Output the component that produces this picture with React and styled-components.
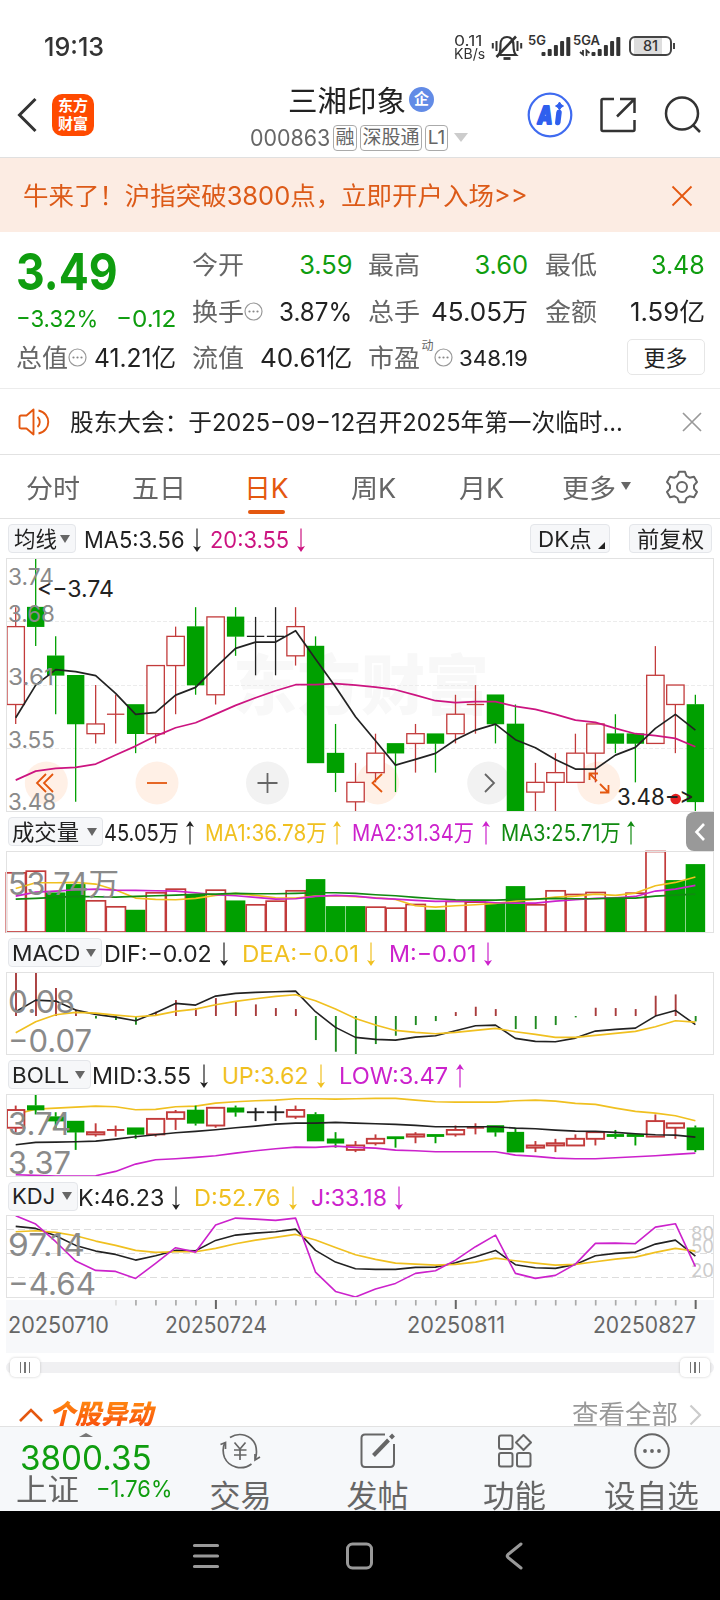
import React, { useLayoutEffect, useRef, useState } from "react";
import styled, { createGlobalStyle } from "styled-components";

const GREEN = "#00a000";
const TEXT_GREEN = "#0f9d0f";
const RED = "#c23b3b";
const ORANGE = "#e4570f";
const INK = "#222";
const YELLOW = "#f0c020";
const PURPLE = "#cc22cc";
const PINK = "#cc1480";

// kind, body top, body bottom, high, low
const candles = [
  ["r", 3.67, 3.59, 3.69, 3.57],
  ["g", 3.69, 3.67, 3.74, 3.65],
  ["g", 3.64, 3.62, 3.66, 3.58],
  ["g", 3.62, 3.57, 3.62, 3.49],
  ["r", 3.57, 3.56, 3.61, 3.55],
  ["r", 3.58, 3.58, 3.6, 3.55],
  ["g", 3.59, 3.56, 3.59, 3.54],
  ["r", 3.63, 3.56, 3.63, 3.55],
  ["r", 3.66, 3.63, 3.67, 3.58],
  ["g", 3.67, 3.61, 3.69, 3.6],
  ["r", 3.68, 3.6, 3.68, 3.59],
  ["g", 3.68, 3.66, 3.69, 3.64],
  ["k", 3.66, 3.66, 3.68, 3.62],
  ["k", 3.66, 3.66, 3.69, 3.62],
  ["r", 3.67, 3.64, 3.69, 3.63],
  ["g", 3.65, 3.53, 3.66, 3.53],
  ["g", 3.54, 3.52, 3.57, 3.5],
  ["r", 3.51, 3.49, 3.53, 3.48],
  ["r", 3.54, 3.52, 3.56, 3.51],
  ["g", 3.55, 3.54, 3.55, 3.5],
  ["r", 3.56, 3.55, 3.57, 3.52],
  ["g", 3.56, 3.55, 3.56, 3.52],
  ["r", 3.58, 3.56, 3.6, 3.55],
  ["r", 3.59, 3.59, 3.61, 3.56],
  ["g", 3.6, 3.57, 3.6, 3.55],
  ["g", 3.57, 3.48, 3.59, 3.48],
  ["r", 3.51, 3.5, 3.53, 3.48],
  ["r", 3.52, 3.51, 3.54, 3.48],
  ["r", 3.54, 3.51, 3.56, 3.51],
  ["r", 3.57, 3.54, 3.57, 3.51],
  ["g", 3.56, 3.55, 3.58, 3.54],
  ["g", 3.56, 3.55, 3.56, 3.51],
  ["r", 3.62, 3.55, 3.65, 3.55],
  ["r", 3.61, 3.59, 3.61, 3.54],
  ["g", 3.59, 3.49, 3.6, 3.48],
];

// every series below is stored in thirds of a pixel
const ma5 = [608, 510, 464, 470, 482, 535, 598, 592, 540, 517, 457, 400, 381, 381, 347, 432, 515, 605, 677, 750, 733, 715, 674, 645, 627, 674, 698, 733, 762, 762, 720, 697, 640, 598, 645];
const ma20 = [795, 768, 760, 757, 747, 720, 693, 663, 638, 623, 597, 571, 548, 527, 509, 509, 506, 510, 516, 524, 540, 557, 563, 560, 560, 574, 583, 598, 615, 622, 640, 656, 662, 670, 695];

const volume = "r188 r183 g248 g223 r272 r290 g300 r248 r237 g255 r240 g272 r284 r273 r242 g208 g289 g289 r291 r294 r283 g300 r274 r276 g277 g229 r284 r242 r253 r247 g263 r249 r124 g211 g163"
  .split(" ")
  .map((v) => [v[0], Number(v.slice(1))]);
const vol1 = [235, 218, 218, 217, 222, 240, 264, 268, 269, 265, 256, 250, 256, 263, 264, 258, 257, 260, 263, 268, 287, 291, 287, 284, 280, 273, 268, 261, 258, 252, 256, 249, 227, 217, 201];
const vol2 = [258, 246, 243, 239, 237, 240, 241, 242, 243, 248, 254, 257, 262, 267, 266, 259, 256, 258, 264, 267, 271, 274, 273, 273, 278, 279, 279, 273, 269, 265, 263, 259, 243, 237, 226];
const vol3 = [267, 265, 262, 259, 260, 261, 259, 257, 255, 253, 252, 250, 251, 251, 250, 248, 248, 250, 254, 257, 262, 266, 269, 270, 270, 268, 267, 265, 266, 266, 264, 264, 258, 255, 252];

const macdBars = [487, 487, 534, 598, 625, 630, 644, 605, 570, 594, 564, 574, 583, 594, 597, 690, 725, 733, 702, 677, 645, 633, 606, 590, 597, 657, 657, 645, 622, 593, 594, 597, 557, 553, 634];
const dif = [605, 570, 573, 600, 613, 621, 632, 608, 580, 585, 558, 550, 547, 545, 543, 605, 652, 682, 688, 690, 681, 677, 662, 647, 645, 685, 694, 695, 684, 663, 658, 654, 618, 601, 644];
const dea = [668, 635, 614, 607, 609, 615, 620, 616, 604, 597, 584, 574, 566, 559, 554, 572, 597, 625, 645, 661, 667, 671, 667, 661, 655, 665, 673, 682, 682, 676, 670, 664, 650, 632, 636];

const bollUp = [160, 145, 142, 139, 136, 138, 147, 146, 138, 136, 127, 123, 120, 118, 114, 114, 115, 114, 113, 113, 118, 123, 124, 124, 124, 120, 118, 121, 128, 131, 142, 152, 157, 165, 180];
const bollMid = [252, 245, 244, 243, 241, 235, 228, 222, 216, 212, 207, 201, 196, 190, 187, 187, 185, 187, 189, 191, 194, 198, 198, 198, 198, 202, 204, 208, 211, 212, 215, 219, 222, 223, 229];
const bollLow = [342, 344, 346, 346, 345, 332, 310, 297, 294, 290, 285, 277, 270, 264, 259, 260, 256, 260, 262, 268, 270, 273, 273, 273, 273, 283, 287, 292, 294, 294, 291, 288, 285, 281, 277];

const kLine = [499, 505, 527, 556, 573, 583, 600, 587, 571, 572, 541, 525, 519, 515, 507, 571, 606, 626, 628, 628, 622, 621, 608, 590, 571, 614, 623, 625, 613, 587, 580, 576, 552, 540, 588];
const dLine = [515, 512, 517, 527, 543, 556, 571, 577, 575, 575, 565, 551, 540, 532, 523, 540, 562, 584, 598, 609, 612, 615, 613, 606, 594, 602, 609, 615, 613, 605, 597, 591, 577, 565, 573];
const jLine = [467, 492, 545, 603, 631, 634, 655, 610, 563, 576, 495, 474, 477, 481, 474, 636, 694, 711, 687, 670, 640, 632, 600, 560, 525, 640, 655, 646, 612, 550, 549, 551, 501, 491, 620];

const xAt = (i) => 15.7 + i * 19.99;

const Line = ({ data, base, color, width = 1.6 }) => (
  <polyline
    fill='none'
    stroke={color}
    strokeWidth={width}
    strokeLinejoin='round'
    points={data.map((v, i) => `${xAt(i).toFixed(1)},${((v - base) / 3 + 0.4).toFixed(1)}`).join(" ")}
  />
);

const Candles = ({ top, perUnit, stroke }) => {
  const y = (p) => 0.5 + (top - p) * perUnit;
  return candles.map(([kind, a, b, high, low], i) => {
    const x = xAt(i);
    const color = kind === "g" ? GREEN : kind === "r" ? RED : "#222";
    const h = y(b) - y(a);
    return (
      <g key={i} stroke={color} strokeWidth={stroke}>
        <line x1={x} x2={x} y1={y(high)} y2={y(a)} />
        <line x1={x} x2={x} y1={y(b)} y2={y(low)} />
        {h < 0.1 && <line x1={x - 8.7} x2={x + 8.7} y1={y(a)} y2={y(a)} />}
        {h >= 0.1 && kind === "g" && (
          <rect x={x - 8.7} y={y(a) - 0.3} width='17.4' height={h + 0.6} fill={GREEN} stroke='none' />
        )}
        {h >= 0.1 && kind === "r" && (
          <rect x={x - 8.7} y={y(a)} width='17.4' height={h} fill='#fff' />
        )}
      </g>
    );
  });
};

const Label = ({ x, y, w, size = 31, color = "#8a8a8a", children }) => (
  <text x={x} y={y} fontSize={size} fill={color} textLength={w} lengthAdjust='spacingAndGlyphs'>
    {children}
  </text>
);

// squeezes or widens one line of text to the given width
const Fit = ({ w, children, ...rest }) => {
  const ref = useRef(null);
  const [scale, setScale] = useState(1);
  useLayoutEffect(() => {
    setScale(w / ref.current.offsetWidth);
  }, [w, children]);
  return (
    <FitBox $w={w} {...rest}>
      <span ref={ref} style={{ transform: `scaleX(${scale})` }}>
        {children}
      </span>
    </FitBox>
  );
};

const Arrow = ({ up }) => (
  <svg width='10' height='26' viewBox='0 0 10 26' fill='none' stroke='currentColor' strokeWidth='1.2'>
    {up ? <path d='M5 24.5V3' /> : <path d='M5 1.5V23' />}
    {up ? (
      <path d='M5 1L9 7L5 5.5L1 7Z' fill='currentColor' stroke='none' />
    ) : (
      <path d='M5 25L9 19L5 20.5L1 19Z' fill='currentColor' stroke='none' />
    )}
  </svg>
);

const Readings = ({ items }) =>
  items.map(([text, color, lead, w, gap, up]) => (
    <Reading key={text} $color={color} $lead={lead} $gap={gap}>
      <Fit w={w}>{text}</Fit>
      <Arrow up={up} />
    </Reading>
  ));

const Picker = ({ width, w, pad, children }) => (
  <Pill $w={width} $pad={pad}>
    <Fit w={w}>{children}</Fit>
    <Caret />
  </Pill>
);

const Info = () => (
  <svg width='19' height='19' viewBox='0 0 19 19' fill='none' stroke='#999' strokeWidth='1.2'>
    <circle cx='9.5' cy='9.5' r='8.5' />
    <g fill='#888' stroke='none'>
      <circle cx='5.5' cy='9.5' r='1.1' />
      <circle cx='9.5' cy='9.5' r='1.1' />
      <circle cx='13.5' cy='9.5' r='1.1' />
    </g>
  </svg>
);

const Signal = ({ label, w, data }) => (
  <SignalBox $w={w}>
    <b>{label}</b>
    <svg width='44' height='21' viewBox='0 0 44 21' fill='#333'>
      <rect x='13.5' y='16' width='4' height='4' rx='1' />
      <rect x='19.7' y='13' width='4' height='7' rx='1' />
      <rect x='25.9' y='9' width='4' height='11' rx='1' />
      <rect x='32.1' y='5' width='4' height='15' rx='1' />
      <rect x='38.3' y='1' width='4' height='19' rx='1' />
      {data && <path d='M5 14V18.5L2 16M8.5 20V14.5L11.5 17' stroke='#333' strokeWidth='1.8' fill='none' />}
    </svg>
  </SignalBox>
);

const StatusBar = () => (
  <Status>
    <Clock>
      <Fit w={60}>19:13</Fit>
    </Clock>
    <Speed>
      <Fit w={29}>0.11</Fit>
      <Fit w={31}>KB/s</Fit>
    </Speed>
    <BellOff width='32' height='27' viewBox='0 0 32 27' fill='none' stroke='#333' strokeWidth='2.2'>
      <path d='M8.5 21H25C22.500 18.500 22.500 16 22.500 11.500C22.500 6 20 3 16 3C12 3 9.500 6 9.500 10.500C9.500 15.500 9.500 18 8 20.500' />
      <path d='M12.500 24.500H19.500' strokeWidth='2.800' />
      <path d='M25 2.500L5.500 23' strokeWidth='2.600' />
      <path d='M1.800 9V14.500M5.500 7V17M30.200 9V14.500M26.500 7V17' strokeWidth='2' />
    </BellOff>
    <Signal label='5G' w={45} />
    <Signal label='5GA' w={50} data />
    <Battery>
      <span>81</span>
    </Battery>
  </Status>
);

const Header = () => (
  <Head>
    <svg width='22' height='38' viewBox='0 0 22 38' fill='none' stroke='#333' strokeWidth='3'>
      <path d='M19.500 3L3.500 19L19.500 35' />
    </svg>
    <Logo>
      <span>东方</span>
      <span>财富</span>
    </Logo>
    <Title>
      <div className='name'>
        <Fit w={118}>三湘印象</Fit>
        <i>企</i>
      </div>
      <div className='code'>
        <Fit w={80}>000863</Fit>
        <Tag $w={24}>融</Tag>
        <Tag $w={62}>深股通</Tag>
        <Tag $w={23}>L1</Tag>
        <em />
      </div>
    </Title>
    <Tools>
      <svg width='46' height='46' viewBox='0 0 46 46'>
        <circle cx='23' cy='23' r='21.300' fill='#fff' stroke='#3f6bf0' strokeWidth='2.200' />
        <text x='10.500' y='32' fontSize='25' fontWeight='900' fontStyle='italic' fill='#2f5fee' stroke='#2f5fee' strokeWidth='1.800' strokeLinejoin='round' textLength='15' lengthAdjust='spacingAndGlyphs'>
          A
        </text>
        <path d='M32 20.500L30.800 30.500' stroke='#2f5fee' strokeWidth='5.500' strokeLinecap='round' />
        <path d='M32.500 10L34 12.500L36.500 14L34 15.500L32.500 18L31 15.500L28.500 14L31 12.500Z' fill='#2f5fee' stroke='#2f5fee' />
      </svg>
      <svg width='38' height='38' viewBox='0 0 38 38' fill='none' stroke='#333' strokeWidth='2.500'>
        <path d='M15 3H4C2.800 3 2.500 3.500 2.500 4.500V33.500C2.500 34.500 3 35 4 35H34C35 35 35.500 34.500 35.500 33.500V24' />
        <path d='M21 3H35.500V17M35.500 3L18 20.500' />
      </svg>
      <svg width='40' height='40' viewBox='0 0 40 40' fill='none' stroke='#333' strokeWidth='2.500'>
        <circle cx='19' cy='18.500' r='16' />
        <path d='M30 30L37 37' />
      </svg>
    </Tools>
  </Head>
);

const Cell = ({ label, info, sup, value, w, green, small }) => (
  <QuoteCell $green={green} $small={small}>
    <Fit w={52}>{label}</Fit>
    {sup && <sup>{sup}</sup>}
    {info && <Info />}
    <Fit className='value' w={w}>
      {value}
    </Fit>
  </QuoteCell>
);

const Quote = () => (
  <QuoteGrid>
    <PriceCell>
      <div className='price'>
        <Fit w={102}>3.49</Fit>
      </div>
      <div className='change'>
        <Fit w={82}>−3.32%</Fit>
        <Fit w={60}>−0.12</Fit>
      </div>
    </PriceCell>
    <Cell label='今开' value='3.59' w={53} green />
    <Cell label='最高' value='3.60' w={54} green />
    <Cell label='最低' value='3.48' w={54} green />
    <Cell label='换手' info value='3.87%' w={73} />
    <Cell label='总手' value='45.05万' w={97} />
    <Cell label='金额' value='1.59亿' w={75} />
    <Cell label='总值' info value='41.21亿' w={82} />
    <Cell label='流值' value='40.61亿' w={92} />
    <Cell label='市盈' sup='动' info value='348.19' w={69} small />
    <MoreButton>更多</MoreButton>
  </QuoteGrid>
);

const roundKeys = [
  [46.3, "#fff0e6"],
  [157, "#fff0e6"],
  [267.5, "#f2f2f2"],
  [377.7, "#fff0e6"],
  [488.7, "#f2f2f2"],
  [598.7, "#fff0e6"],
];

const MainChart = () => (
  <Plot height='254' viewBox='6 0 708 254'>
    <text x='233' y='151' fontSize='65' fontWeight='900' fill='#f8f8f8' textLength='256' lengthAdjust='spacingAndGlyphs'>
      东方财富
    </text>
    <g stroke='#ececec' strokeDasharray='4 2'>
      <path d='M7 63.500H713M7 127.500H713M7 190.500H713' />
    </g>
    {roundKeys.map(([cx, fill]) => (
      <circle key={cx} cx={cx} cy='225' r='21.500' fill={fill} />
    ))}
    <Candles top={3.74} perUnit={973.3} stroke={1.3} />
    <Line data={ma20} base={130} color={PINK} width={1.7} />
    <Line data={ma5} base={130} color={INK} width={1.7} />
    <g fill='none' stroke={ORANGE} strokeWidth='1.800'>
      <path d='M46 216L37 225L46 234M53 216L44 225L53 234' />
      <path d='M147 225H167' />
      <path d='M382 216L372.500 225L382 234' />
      <path d='M597 223L589.500 215.500M589.500 222V215.500H598M600 226L608 234M600 234.500H608.500V227' />
    </g>
    <path d='M257.500 225H277.500M267.500 215V235M485 216L494 225L485 234' fill='none' stroke='#666' strokeWidth='1.800' />
    <Label x={8} y={27} w={46} size={23}>3.74</Label>
    <Label x={8} y={64} w={47} size={23}>3.68</Label>
    <Label x={8} y={127} w={46} size={23}>3.61</Label>
    <Label x={8} y={190} w={47} size={23}>3.55</Label>
    <Label x={8} y={252} w={48} size={23}>3.48</Label>
    <Label x={37} y={39} w={77} size={23} color={INK}>{"<−3.74"}</Label>
    <circle cx='675.700' cy='241' r='5.300' fill='#e62222' />
    <Label x={617} y={247} w={77} size={23} color={INK}>{"3.48−>"}</Label>
    <Frame width='707' height='253' />
  </Plot>
);

const VolumeChart = () => (
  <Plot height='82' viewBox='6 0 708 82'>
    {volume.map(([kind, top], i) => {
      const y = (top - 124) / 3 + 0.5;
      return kind === "g" ? (
        <rect key={i} x={xAt(i) - 9.7} y={y - 0.4} width='19.500' height={82 - y} fill={GREEN} />
      ) : (
        <rect key={i} x={xAt(i) - 9.4} y={y} width='19.200' height={81 - y} fill='#fff' stroke={RED} strokeWidth='1.700' />
      );
    })}
    <Line data={vol1} base={124} color={YELLOW} />
    <Line data={vol2} base={124} color={PURPLE} />
    <Line data={vol3} base={124} color='#118a11' />
    <Label x={8} y={43.5} w={111}>53.74万</Label>
    <Frame width='707' height='81' />
  </Plot>
);

const MacdChart = () => (
  <Plot height='83' viewBox='6 0 708 83'>
    {macdBars.map((v, i) => (
      <path
        key={i}
        d={`M${xAt(i) + 0.3} 44V${(v - 487) / 3 + 0.4}`}
        stroke={v < 619 ? "#a83c3c" : "#1f8a1f"}
        strokeWidth='1.900'
      />
    ))}
    <Line data={dif} base={487} color={INK} width={1.6} />
    <Line data={dea} base={487} color={YELLOW} width={1.6} />
    <Label x={8} y={41} w={67}>0.08</Label>
    <Label x={8} y={80} w={84}>−0.07</Label>
    <Frame width='707' height='82' />
  </Plot>
);

const BollChart = () => (
  <Plot height='83' viewBox='6 0 708 83'>
    <Line data={bollUp} base={101} color={YELLOW} />
    <Candles top={3.74} perUnit={221.6} stroke={1.9} />
    <Line data={bollMid} base={101} color={INK} />
    <Line data={bollLow} base={101} color={PURPLE} />
    <Label x={8} y={41} w={63}>3.74</Label>
    <Label x={8} y={79.5} w={63}>3.37</Label>
    <Frame width='707' height='82' />
  </Plot>
);

const KdjChart = () => (
  <Plot height='83' viewBox='6 0 708 83'>
    <path d='M7 14.500H713M7 38.500H713M7 62.500H713' stroke='#ddd' strokeDasharray='7 4' />
    <Label x={691} y={25} w={23} size={18} color='#ccc'>80</Label>
    <Label x={691} y={38} w={23} size={18} color='#ccc'>50</Label>
    <Label x={691} y={62} w={23} size={18} color='#ccc'>20</Label>
    <Line data={kLine} base={466} color={INK} width={1.6} />
    <Line data={dLine} base={466} color={YELLOW} width={1.6} />
    <Line data={jLine} base={466} color={PURPLE} width={1.6} />
    <Label x={8} y={41} w={77}>97.14</Label>
    <Label x={8} y={80} w={88}>−4.64</Label>
    <Frame width='707' height='82' />
  </Plot>
);

const dates = [
  [8, "20250710", 101],
  [165, "20250724", 102],
  [407, "20250811", 98],
  [593, "20250827", 103],
];

const Axis = () => (
  <AxisPlot height='53' viewBox='6 0 708 53'>
    {candles.map((_, i) => {
      if (i < 5) return null;
      const major = i === 10 || i === 22 || i === 34;
      return (
        <path
          key={i}
          d={`M${xAt(i) + 0.3} 0V${major ? 9 : 5.5}`}
          stroke={major ? "#666" : i === 5 ? "#ddd" : "#aaa"}
          strokeWidth={major ? 2 : 1.7}
        />
      );
    })}
    {dates.map(([x, text, w]) => (
      <Label key={text} x={x} y={33} w={w} size={23} color='#666'>{text}</Label>
    ))}
  </AxisPlot>
);

const Grip = () => (
  <GripBox>
    <i />
    <i />
    <i />
  </GripBox>
);

const tabs = [
  ["分时", 54],
  ["五日", 54],
  ["日K", 44],
  ["周K", 45],
  ["月K", 45],
];

const BottomBar = () => (
  <Bottom>
    <IndexCell>
      <u />
      <div className='index'>
        <Fit w={132}>3800.35</Fit>
      </div>
      <div className='row'>
        <Fit w={63}>上证</Fit>
        <Fit className='pct' w={76}>
          −1.76%
        </Fit>
      </div>
    </IndexCell>
    <Action>
      <svg width='42' height='38' viewBox='0 0 42 38' fill='none' stroke='#666' strokeWidth='1.700'>
        <path d='M10 5.500C19.500 -0.500 31.500 3 35.500 13C37 18 36.800 22 35.500 27' />
        <path d='M31.500 32C22 39 9 35.500 4.500 25.500C2.500 20 2.500 15.500 5 10.500' />
        <path d='M0.500 12.500L5.500 10.500V17M40 25L35 28V22' />
        <path d='M14.500 10.500L20 17L25.500 10.500M20 17V28M14 18H26.500M14 23H26.500' />
      </svg>
      <Fit w={62}>交易</Fit>
    </Action>
    <Action>
      <svg width='38' height='38' viewBox='0 0 38 38' fill='none' stroke='#666' strokeWidth='2'>
        <path d='M26 2.500H6C4 2.500 2.500 4 2.500 6V31C2.500 33.500 4 35 6 35H31C33.500 35 35 33.500 35 31V12' />
        <path d='M14.500 23.500L29.500 8' strokeWidth='4' />
        <path d='M31.500 6L34.500 3' strokeWidth='4' />
      </svg>
      <Fit w={62}>发帖</Fit>
    </Action>
    <Action>
      <svg width='38' height='38' viewBox='0 0 38 38' fill='none' stroke='#666' strokeWidth='2'>
        <rect x='3' y='3.500' width='13.500' height='13.500' rx='2' />
        <rect x='3' y='21' width='13.500' height='13.500' rx='2' />
        <rect x='21' y='21' width='13.500' height='13.500' rx='2' />
        <path d='M27.500 3L35 10.500L27.500 18L20 10.500Z' strokeLinejoin='round' />
      </svg>
      <Fit w={63}>功能</Fit>
    </Action>
    <Action>
      <svg width='38' height='38' viewBox='0 0 38 38' fill='none' stroke='#666' strokeWidth='2'>
        <circle cx='19' cy='19' r='16.800' />
        <g fill='#666' stroke='none'>
          <circle cx='12' cy='19' r='1.900' />
          <circle cx='19' cy='19' r='1.900' />
          <circle cx='26' cy='19' r='1.900' />
        </g>
      </svg>
      <Fit w={95}>设自选</Fit>
    </Action>
  </Bottom>
);

const App = () => (
  <Screen>
    <GlobalStyle />
    <StatusBar />
    <Header />
    <Banner>
      <Fit w={505}>牛来了！沪指突破3800点，立即开户入场&gt;&gt;</Fit>
      <svg width='22' height='22' viewBox='0 0 22 22' stroke={ORANGE} strokeWidth='1.800'>
        <path d='M1.500 1.500L20.500 20.500M20.500 1.500L1.500 20.500' />
      </svg>
    </Banner>
    <Quote />
    <News>
      <svg width='33' height='28' viewBox='0 0 33 28' fill='none' stroke={ORANGE} strokeWidth='1.900'>
        <path d='M8.500 7.500H3C2 7.500 1.500 8 1.500 9V19C1.500 20 2 20.500 3 20.500H8.500L15.500 26.500V1.500Z' strokeLinejoin='round' />
        <path d='M19.500 9C22.500 11.500 22.500 16.500 19.500 19M20.500 2.500C33.500 5 33.500 23 20.500 25.500' />
      </svg>
      <Fit w={553}>股东大会：于2025−09−12召开2025年第一次临时...</Fit>
      <svg width='20' height='20' viewBox='0 0 20 20' stroke='#999' strokeWidth='1.700'>
        <path d='M1 1L19 19M19 1L1 19' />
      </svg>
    </News>
    <Tabs>
      {tabs.map(([name, w]) => (
        <Tab key={name} $active={name === "日K"}>
          <Fit w={w}>{name}</Fit>
        </Tab>
      ))}
      <MoreTab>
        <Fit w={54}>更多</Fit>
        <Caret />
      </MoreTab>
      <svg width='34' height='34' viewBox='0 0 34 34' fill='none' stroke='#666' strokeWidth='2' strokeLinejoin='round'>
        <path d='M14 1.800H20L21.500 6L24.500 7.700L29 6.700L32 12L29 15.300V18.700L32 22L29 27.300L24.500 26.300L21.500 28L20 32.200H14L12.500 28L9.500 26.300L5 27.300L2 22L5 18.700V15.300L2 12L5 6.700L9.500 7.700L12.500 6Z' />
        <circle cx='17' cy='17' r='5' />
      </svg>
    </Tabs>
    <Legend>
      <Picker width={68} w={43} pad={5}>均线</Picker>
      <Readings
        items={[
          ["MA5:3.56", INK, 8, 101, 7],
          ["20:3.55", PINK, 8, 79, 7],
        ]}
      />
      <LegendRight>
        <Pill $w={80} $pad={7} $corner>
          <Fit w={54}>DK点</Fit>
        </Pill>
        <Pill $w={83} $pad={7}>
          <Fit w={67}>前复权</Fit>
        </Pill>
      </LegendRight>
    </Legend>
    <MainChart />
    <Legend>
      <Picker width={95} w={67}>成交量</Picker>
      <Readings
        items={[
          ["45.05万", INK, 1, 75, 6, true],
          ["MA1:36.78万", YELLOW, 10, 122, 5, true],
          ["MA2:31.34万", PURPLE, 10, 122, 6.5, true],
          ["MA3:25.71万", "#118a11", 10.5, 120, 5, true],
        ]}
      />
      <SideTab>
        <svg width='12' height='20' viewBox='0 0 12 20' fill='none' stroke='#fff' strokeWidth='2.600'>
          <path d='M10 2L2.500 10L10 18' />
        </svg>
      </SideTab>
    </Legend>
    <VolumeChart />
    <Legend>
      <Picker width={94} w={68}>MACD</Picker>
      <Readings
        items={[
          ["DIF:−0.02", INK, 2, 108, 7],
          ["DEA:−0.01", YELLOW, 13, 117, 7],
          ["M:−0.01", PURPLE, 13, 87, 7],
        ]}
      />
    </Legend>
    <MacdChart />
    <Legend>
      <Picker width={83} w={57}>BOLL</Picker>
      <Readings
        items={[
          ["MID:3.55", INK, 1, 99, 8],
          ["UP:3.62", YELLOW, 13, 86, 8],
          ["LOW:3.47", PURPLE, 13, 109, 6.5, true],
        ]}
      />
    </Legend>
    <BollChart />
    <Legend $h={38}>
      <Picker width={70} w={43}>KDJ</Picker>
      <Readings
        items={[
          ["K:46.23", INK, 0, 86, 7],
          ["D:52.76", YELLOW, 13, 86, 7.5],
          ["J:33.18", PURPLE, 13.5, 76, 7],
        ]}
      />
    </Legend>
    <KdjChart />
    <Axis />
    <Slider>
      <Grip />
      <Grip />
    </Slider>
    <Section>
      <svg width='26' height='16' viewBox='0 0 26 16' fill='none' stroke={ORANGE} strokeWidth='2.600'>
        <path d='M2 14L13 3L24 14' />
      </svg>
      <h3>
        <Fit w={107}>个股异动</Fit>
      </h3>
      <Fit w={106}>查看全部</Fit>
      <svg width='13' height='22' viewBox='0 0 13 22' fill='none' stroke='#ccc' strokeWidth='2.200'>
        <path d='M1.500 1.500L11 11L1.500 20.500' />
      </svg>
    </Section>
    <BottomBar />
    <SystemNav>
      <svg width='28' height='28' viewBox='0 0 28 28' stroke='#999' strokeWidth='3.200' strokeLinecap='round'>
        <path d='M2.500 3.500H25.500M2.500 14H25.500M2.500 24.500H25.500' />
      </svg>
      <svg width='28' height='28' viewBox='0 0 28 28' fill='none' stroke='#999' strokeWidth='3'>
        <rect x='2.500' y='2' width='24' height='24' rx='5' />
      </svg>
      <svg width='28' height='28' viewBox='0 0 28 28' fill='none' stroke='#999' strokeWidth='3' strokeLinecap='round' strokeLinejoin='round'>
        <path d='M23 2L10 12.500C9 13.500 9 14.500 10 15.500L23 26' />
      </svg>
    </SystemNav>
  </Screen>
);

export default App;

const GlobalStyle = createGlobalStyle`
  * {
    box-sizing: border-box;
  }
  body {
    margin: 0;
    background: #fff;
    font-family: Inter, "Noto Sans CJK SC", sans-serif;
    font-feature-settings: "calt" 0, "case" 1;
  }
  svg {
    display: block;
    flex-shrink: 0;
  }
`;

const Screen = styled.div`
  display: flex;
  flex-direction: column;
  width: 720px;
  height: 1600px;
  overflow: hidden;
  color: #222;
  line-height: 1.2;
`;

const FitBox = styled.span`
  display: inline-flex;
  flex-shrink: 0;
  width: ${({ $w }) => $w}px;
  white-space: pre;
  > span {
    flex-shrink: 0;
    transform-origin: 0 50%;
  }
`;

const Caret = styled.i`
  width: 0;
  height: 0;
  border: 5px solid transparent;
  border-top: 8px solid #666;
  border-bottom: 0;
`;

const Status = styled.div`
  display: flex;
  height: 70px;
  padding: 34px 0 0 44px;
`;

const Clock = styled.div`
  width: 410px;
  padding-top: 1px;
  font-size: 26px;
  line-height: 24px;
  font-weight: 500;
  color: #333;
`;

const Speed = styled.div`
  display: flex;
  flex-direction: column;
  width: 37px;
  font-size: 14.5px;
  line-height: 13px;
  color: #333;
`;

const BellOff = styled.svg`
  margin-right: 4px;
`;

const SignalBox = styled.div`
  display: flex;
  position: relative;
  justify-content: flex-end;
  width: ${({ $w }) => $w}px;
  padding-top: 2px;
  color: #333;
  b {
    position: absolute;
    left: 1px;
    top: 0;
    font-size: 13px;
    line-height: 12px;
    font-weight: 600;
  }
`;

const Battery = styled.div`
  position: relative;
  width: 43px;
  height: 20px;
  margin: 2px 0 0 7px;
  border: 2px solid #444;
  border-radius: 6px;
  text-align: center;
  font-size: 14.5px;
  line-height: 16px;
  font-weight: 500;
  color: #333;
  background: linear-gradient(90deg, #fff 3px, #ddd 3px, #ddd 31px, #fff 31px);
  &::after {
    content: "";
    position: absolute;
    right: -5px;
    top: 5px;
    width: 2px;
    height: 6px;
    background: #444;
  }
`;

const Head = styled.header`
  display: flex;
  align-items: center;
  height: 88px;
  padding: 3px 17px 0 16px;
  border-bottom: 1px solid #e0e0e0;
`;

const Logo = styled.div`
  display: flex;
  flex-direction: column;
  align-items: center;
  justify-content: center;
  width: 42px;
  height: 42px;
  margin: 0 1px 0 14px;
  border-radius: 10px;
  background: #ff4a00;
  color: #fff;
  font-size: 15px;
  line-height: 18px;
  font-weight: 700;
`;

const Title = styled.div`
  flex: 1;
  display: flex;
  flex-direction: column;
  padding: 8px 0 0 155px;
  .name {
    display: flex;
    align-items: center;
    padding-left: 38px;
    height: 37px;
    font-size: 29px;
  }
  .name i {
    width: 25px;
    height: 25px;
    margin: -6px 0 0 3px;
    border-radius: 50%;
    background: #628be6;
    color: #fff;
    text-align: center;
    font-style: normal;
    font-size: 15px;
    line-height: 24px;
    font-weight: 700;
  }
  .code {
    display: flex;
    align-items: center;
    height: 33px;
    font-size: 22.5px;
    color: #666;
  }
  .code em {
    margin-left: 6px;
    border: 7px solid transparent;
    border-top: 9px solid #ccc;
    border-bottom: 0;
  }
`;

const Tag = styled.span`
  width: ${({ $w }) => $w}px;
  height: 26px;
  margin-left: 3px;
  border: 1px solid #aaa;
  border-radius: 4px;
  text-align: center;
  font-size: 19px;
  line-height: 24px;
  white-space: nowrap;
`;

const Tools = styled.div`
  display: flex;
  align-items: center;
  gap: 26px;
`;

const Banner = styled.div`
  display: flex;
  align-items: center;
  justify-content: space-between;
  height: 74px;
  padding: 1px 27px 0 23px;
  background: #fcece3;
  color: #dc5a18;
  font-size: 25px;
`;

const QuoteGrid = styled.section`
  display: grid;
  grid-template-columns: repeat(4, 160px);
  grid-template-rows: repeat(3, 46.5px);
  column-gap: 16.2px;
  height: 157px;
  padding: 10px 15px 0 16px;
  border-bottom: 1px solid #ececec;
`;

const PriceCell = styled.div`
  grid-row: 1 / 3;
  color: ${TEXT_GREEN};
  .price {
    height: 63px;
    font-size: 51.5px;
    line-height: 58px;
    font-weight: 700;
  }
  .change {
    display: flex;
    justify-content: space-between;
    font-size: 23.5px;
    line-height: 28px;
  }
`;

const QuoteCell = styled.div`
  display: flex;
  align-items: center;
  font-size: 25.5px;
  line-height: 30px;
  color: #666;
  > svg {
    margin: -1px 0 0;
  }
  > sup {
    align-self: flex-start;
    width: 14px;
    padding-left: 1px;
    font-size: 12px;
    line-height: 22px;
  }
  .value {
    margin-left: auto;
    font-size: ${({ $small }) => ($small ? 22 : 25.5)}px;
    color: ${({ $green }) => ($green ? TEXT_GREEN : "#222")};
  }
`;

const MoreButton = styled.button`
  justify-self: end;
  align-self: center;
  width: 78px;
  height: 36px;
  margin-top: -2px;
  padding: 1px 0 0;
  border: 1px solid #e6e6e6;
  border-radius: 5px;
  background: #fff;
  color: #222;
  font: inherit;
  font-size: 22px;
`;

const News = styled.div`
  display: flex;
  align-items: center;
  height: 66px;
  padding: 0 18px;
  border-bottom: 1px solid #e2e2e2;
  font-size: 24px;
  > span {
    margin: 3px auto 0 19px;
  }
`;

const Tabs = styled.nav`
  display: flex;
  align-items: center;
  height: 64px;
  border-bottom: 1px solid #e2e2e2;
  color: #666;
  font-size: 26.5px;
`;

const Tab = styled.div`
  display: flex;
  align-items: center;
  justify-content: center;
  width: 107.5px;
  height: 63px;
  padding-top: 4px;
  color: ${({ $active }) => ($active ? ORANGE : "#666")};
  position: relative;
  &:first-child {
    width: 105px;
  }
  &::after {
    content: "";
    display: ${({ $active }) => ($active ? "block" : "none")};
    position: absolute;
    bottom: 4px;
    width: 37px;
    height: 4px;
    border-radius: 2px;
    background: ${ORANGE};
  }
`;

const MoreTab = styled.div`
  display: flex;
  align-items: center;
  gap: 5px;
  width: 103px;
  margin-left: 27px;
  padding-top: 4px;
  > i {
    margin-top: -5px;
  }
`;

const Legend = styled.div`
  display: flex;
  position: relative;
  align-items: center;
  flex-shrink: 0;
  height: ${({ $h = 39 }) => $h}px;
  padding: 0 8px;
`;

const Pill = styled.div`
  display: flex;
  position: relative;
  align-items: center;
  justify-content: space-between;
  width: ${({ $w }) => $w}px;
  height: 29px;
  padding: 0 5px 0 ${({ $pad = 3 }) => $pad}px;
  border: 1px solid #e4e6ea;
  border-radius: 4px;
  background: #f6f7f9;
  font-size: 22px;
  line-height: 26px;
  &::after {
    content: "";
    display: ${({ $corner }) => ($corner ? "block" : "none")};
    position: absolute;
    right: 4px;
    bottom: 3px;
    border-left: 7px solid transparent;
    border-bottom: 7px solid #222;
  }
`;

const LegendRight = styled.div`
  display: flex;
  gap: 19px;
  margin-left: auto;
`;

const Reading = styled.div`
  display: flex;
  align-items: center;
  gap: ${({ $gap }) => $gap}px;
  margin-left: ${({ $lead }) => $lead}px;
  padding-top: 3px;
  color: ${({ $color }) => $color};
  font-size: 23px;
  line-height: 28px;
`;

const SideTab = styled.div`
  display: flex;
  align-items: center;
  justify-content: center;
  position: absolute;
  right: 6px;
  top: 0;
  width: 28px;
  height: 39px;
  border-radius: 8px 0 0 8px;
  background: #999;
`;

const Plot = styled.svg`
  width: 708px;
  margin-left: 6px;
  overflow: visible;
`;

const AxisPlot = styled(Plot)`
  margin-top: 2px;
  background: #f7f8fa;
`;

const Frame = styled.rect.attrs({ x: 6.5, y: 0.5 })`
  fill: none;
  stroke: #e2e2e2;
`;

const Slider = styled.div`
  display: flex;
  flex-shrink: 0;
  align-items: center;
  justify-content: space-between;
  height: 11px;
  margin: 9px 6px 0;
  padding: 0 4px;
  border-radius: 6px;
  background: #f0f0f2;
`;

const GripBox = styled.div`
  display: flex;
  align-items: center;
  justify-content: center;
  gap: 3px;
  width: 30px;
  height: 19px;
  border-radius: 5px;
  background: #fff;
  box-shadow: 0 0 3px rgba(0, 0, 0, 0.2);
  i {
    width: 1.5px;
    height: 11px;
    background: #777;
  }
`;

const Section = styled.div`
  display: flex;
  align-items: center;
  flex: 1;
  overflow: hidden;
  padding: 30px 18px 0 18px;
  color: #999;
  font-size: 26px;
  line-height: 30px;
  h3 {
    margin: 1px auto 0 5px;
    font-size: 27px;
    font-weight: 900;
    font-style: italic;
  }
  h3 span span {
    padding-right: 3px;
    background: linear-gradient(#ff8a10, #f8480c);
    background-clip: text;
    -webkit-background-clip: text;
    color: transparent;
  }
  > svg:last-child {
    margin-left: 11px;
  }
`;

const Bottom = styled.footer`
  display: flex;
  flex-shrink: 0;
  height: 85px;
  border-top: 1px solid #e2e2e2;
  background: #f6f8fa;
  color: #666;
  overflow: hidden;
`;

const IndexCell = styled.div`
  position: relative;
  width: 172px;
  padding: 11px 0 0 16px;
  u {
    position: absolute;
    left: 79px;
    top: 6px;
    border: 7px solid transparent;
    border-top: 0;
    border-bottom: 4px solid #777;
  }
  .index {
    padding-left: 4px;
    color: ${TEXT_GREEN};
    font-size: 34px;
    line-height: 40px;
  }
  .row {
    display: flex;
    justify-content: space-between;
    align-items: center;
    margin-top: -6px;
    font-size: 30px;
    line-height: 34px;
  }
  .pct {
    color: ${TEXT_GREEN};
    font-size: 23px;
  }
`;

const Action = styled.div`
  display: flex;
  flex-direction: column;
  align-items: center;
  width: 137px;
  padding-top: 5px;
  font-size: 31px;
  line-height: 44px;
  > span {
    margin-top: 4px;
  }
`;

const SystemNav = styled.div`
  display: flex;
  flex-shrink: 0;
  align-items: flex-start;
  height: 89px;
  padding: 31px 0 0 192px;
  gap: 125px;
  background: #000;
`;
